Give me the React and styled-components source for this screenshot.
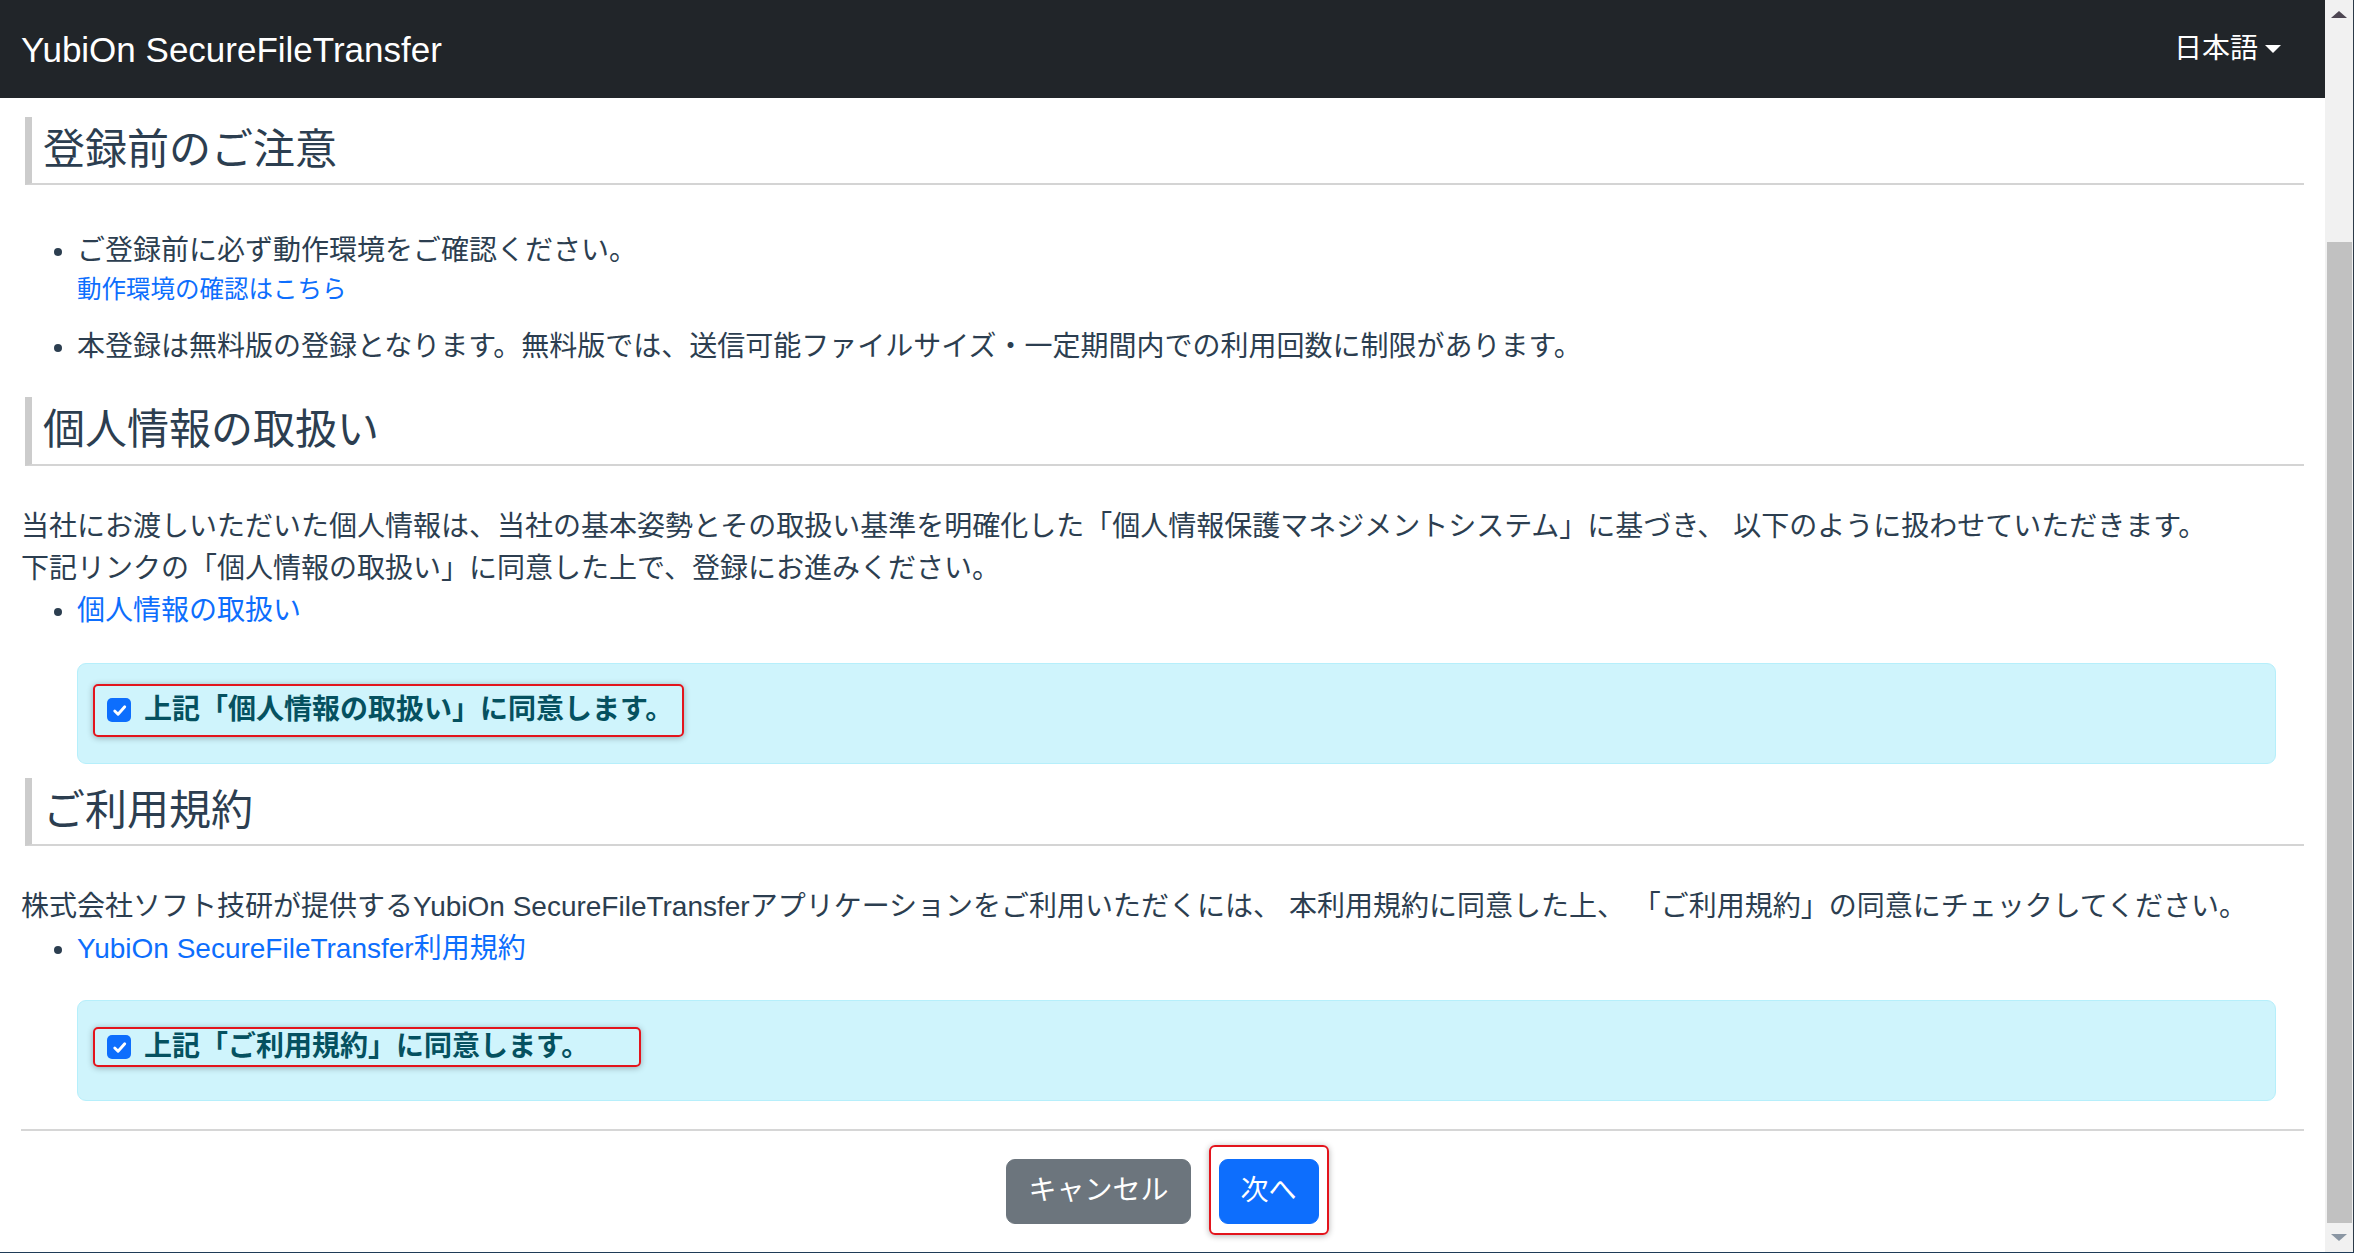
import styled, { createGlobalStyle } from "styled-components";

const GlobalStyle = createGlobalStyle`
  html, body {
    margin: 0;
    padding: 0;
  }
  body {
    font-family: "Liberation Sans", "Noto Sans CJK JP", sans-serif;
    font-size: 28px;
    line-height: 1.5;
    color: #2c3e50;
    background: #fff;
  }
  *, *::before, *::after {
    box-sizing: border-box;
  }
`

const Frame = styled.div`
  display: flex;
  height: 1253px;
  overflow: hidden;
  border-bottom: 1px solid #1f3b57;
`

const Page = styled.div`
  flex: 1;
  min-width: 0;
  display: flex;
  flex-direction: column;
`

const Navbar = styled.nav`
  height: 98px;
  flex-shrink: 0;
  background: #212529;
  display: flex;
  align-items: center;
  justify-content: space-between;
  padding: 0 44px 0 21px;
`

const Brand = styled.a`
  font-size: 35px;
  line-height: 1;
  color: #fff;
  text-decoration: none;
`

const LangToggle = styled.a`
  display: flex;
  align-items: center;
  font-size: 28px;
  color: #fff;
  text-decoration: none;

  &::after {
    content: "";
    margin-left: 7px;
    border-top: 8.4px solid #fff;
    border-left: 8.4px solid transparent;
    border-right: 8.4px solid transparent;
  }
`

const Main = styled.main`
  padding: 0 21px;
`

const SectionTitle = styled.h4`
  margin: ${(props) => props.$mt}px 0 ${(props) => props.$mb}px 4px;
  padding: 8px 0 8px 11px;
  font-size: 42px;
  font-weight: 400;
  line-height: 1.2;
  color: #2c3e50;
  border-left: 7px solid #cccccc;
  border-bottom: 2px solid #d4d4d4;
`

const List = styled.ul`
  margin: 0 0 ${(props) => props.$mb || 0}px;
  padding-left: 56px;
`

const Item = styled.li`
  margin-bottom: ${(props) => props.$gap || 0}px;
`

const Text = styled.p`
  margin: 0;
`

const Link = styled.a`
  color: #0d6efd;
  text-decoration: none;
`

const SmallLink = styled(Link)`
  display: block;
  font-size: 24.5px;
  line-height: 1.5;
`

const Alert = styled.div`
  height: 101px;
  margin: ${(props) => props.$mt}px 28px 0 56px;
  padding: 0 0 6px 15px;
  display: flex;
  align-items: center;
  background: #cff4fc;
  border: 1px solid #b6effb;
  border-radius: 9px;
`

const CheckFrame = styled.label`
  display: inline-flex;
  align-items: center;
  width: ${(props) => props.$w}px;
  height: ${(props) => props.$h}px;
  padding-left: 12px;
  border: 2px solid #e3141c;
  border-radius: 5px;
  box-shadow: 0 1px 6px rgba(0, 0, 0, 0.3);
`

const CheckBox = styled.span`
  width: 24px;
  height: 24px;
  flex-shrink: 0;
  display: flex;
  align-items: center;
  justify-content: center;
  background: #0d6efd;
  border-radius: 5px;
`

const CheckLabel = styled.span`
  margin-left: 13px;
  font-weight: 700;
  color: #055160;
  white-space: nowrap;
`

const Divider = styled.hr`
  margin: 28px 0;
  border: 0;
  border-top: 2px solid #d6d6d6;
`

const ButtonRow = styled.div`
  display: flex;
  justify-content: center;
  gap: 28px;
`

const Button = styled.button`
  position: relative;
  font-family: inherit;
  font-size: 28px;
  line-height: 1.5;
  padding: 10.5px 21px;
  color: #fff;
  border: 1.75px solid ${(props) => (props.$variant === "primary" ? "#0d6efd" : "#6c757d")};
  background: ${(props) => (props.$variant === "primary" ? "#0d6efd" : "#6c757d")};
  border-radius: 9px;
  cursor: pointer;

  ${(props) =>
    props.$marked &&
    `
    &::after {
      content: "";
      position: absolute;
      top: -15px;
      bottom: -12px;
      left: -11px;
      right: -11px;
      border: 2px solid #e3141c;
      border-radius: 6px;
      box-shadow: 0 1px 6px rgba(0, 0, 0, 0.3);
    }
  `}
`

const Scrollbar = styled.div`
  width: 29px;
  flex-shrink: 0;
  display: flex;
  flex-direction: column;
  background: #f1f1f1;
  border-right: 1px solid #2d3a48;
`

const ScrollArrow = styled.div`
  height: 29px;
  display: flex;
  align-items: center;
  justify-content: center;

  &::before {
    content: "";
    border-left: 8px solid transparent;
    border-right: 8px solid transparent;
    ${(props) =>
      props.$down
        ? "border-top: 7px solid #8a96a3;"
        : "border-bottom: 7px solid #4d4652;"}
  }
`

const ScrollTrack = styled.div`
  flex: 1;
  display: flex;
  padding: 213px 1px 0 2px;
`

const ScrollThumb = styled.div`
  flex: 1;
  background: #c1c1c1;
`

const Check = () => (
  <CheckBox>
    <svg width="19" height="19" viewBox="0 0 20 20">
      <path d="m5 10.5 3.5 3.5 7-8" fill="none" stroke="#fff" strokeWidth="3" strokeLinecap="round" strokeLinejoin="round" />
    </svg>
  </CheckBox>
)

const App = () => {
  return (
    <Frame>
      <GlobalStyle />
      <Page>
        <Navbar>
          <Brand>YubiOn SecureFileTransfer</Brand>
          <LangToggle>日本語</LangToggle>
        </Navbar>
        <Main>
          <SectionTitle $mt={19} $mb={45}>登録前のご注意</SectionTitle>
          <List $mb={29}>
            <Item $gap={17}>
              ご登録前に必ず動作環境をご確認ください。
              <SmallLink>動作環境の確認はこちら</SmallLink>
            </Item>
            <Item>本登録は無料版の登録となります。無料版では、送信可能ファイルサイズ・一定期間内での利用回数に制限があります。</Item>
          </List>

          <SectionTitle $mt={0} $mb={40}>個人情報の取扱い</SectionTitle>
          <Text>
            当社にお渡しいただいた個人情報は、当社の基本姿勢とその取扱い基準を明確化した「個人情報保護マネジメントシステム」に基づき、 以下のように扱わせていただきます。
            <br />
            下記リンクの「個人情報の取扱い」に同意した上で、登録にお進みください。
          </Text>
          <List>
            <Item><Link>個人情報の取扱い</Link></Item>
          </List>
          <Alert $mt={31}>
            <CheckFrame $w={591} $h={53}>
              <Check />
              <CheckLabel>上記「個人情報の取扱い」に同意します。</CheckLabel>
            </CheckFrame>
          </Alert>

          <SectionTitle $mt={14} $mb={40}>ご利用規約</SectionTitle>
          <Text>
            株式会社ソフト技研が提供するYubiOn SecureFileTransferアプリケーションをご利用いただくには、 本利用規約に同意した上、 「ご利用規約」の同意にチェックしてください。
          </Text>
          <List>
            <Item><Link>YubiOn SecureFileTransfer利用規約</Link></Item>
          </List>
          <Alert $mt={30}>
            <CheckFrame $w={548} $h={40}>
              <Check />
              <CheckLabel>上記「ご利用規約」に同意します。</CheckLabel>
            </CheckFrame>
          </Alert>

          <Divider />
          <ButtonRow>
            <Button>キャンセル</Button>
            <Button $variant="primary" $marked>次へ</Button>
          </ButtonRow>
        </Main>
      </Page>
      <Scrollbar>
        <ScrollArrow />
        <ScrollTrack>
          <ScrollThumb />
        </ScrollTrack>
        <ScrollArrow $down />
      </Scrollbar>
    </Frame>
  );
};

export default App;
